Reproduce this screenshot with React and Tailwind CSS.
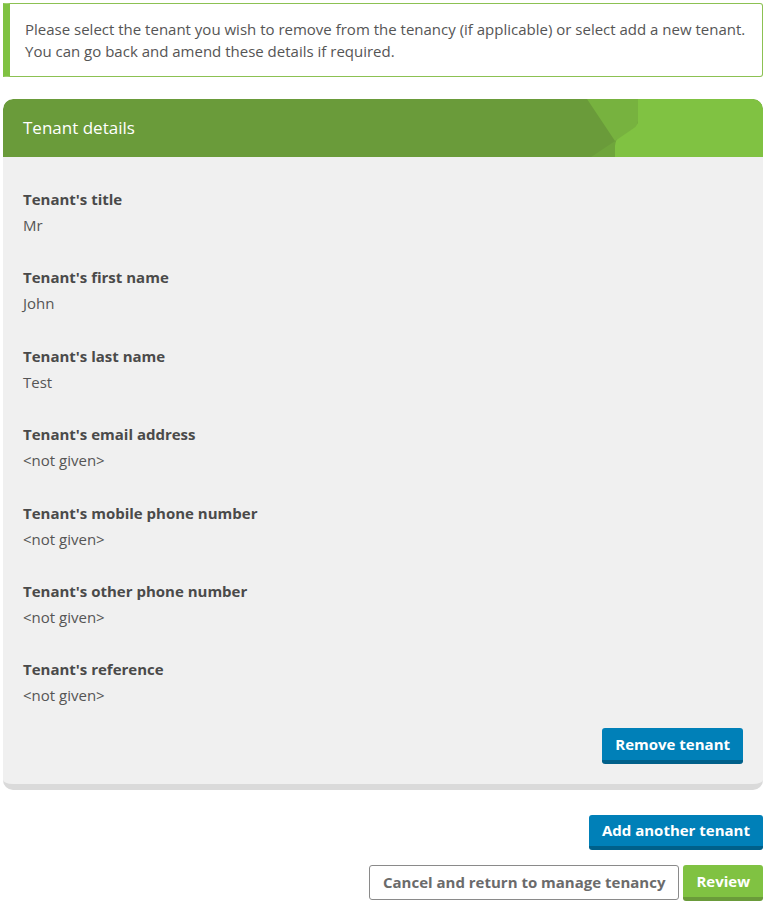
import React from 'react';

const fields = [
  { label: "Tenant's title", value: 'Mr' },
  { label: "Tenant's first name", value: 'John' },
  { label: "Tenant's last name", value: 'Test' },
  { label: "Tenant's email address", value: '<not given>' },
  { label: "Tenant's mobile phone number", value: '<not given>' },
  { label: "Tenant's other phone number", value: '<not given>' },
  { label: "Tenant's reference", value: '<not given>' },
];

const HeaderShapes = () => (
  <svg className="absolute inset-0 w-full h-full" viewBox="0 0 760 58" preserveAspectRatio="none">
    <path d="M635,0 H760 V58 H612 V47 Q612,41 617,37 L635,24 Z" fill="#80c242" />
    <path d="M584,0 H635 V22 Q635,26 631,29 L612,42 Z" fill="#77b23f" />
    <path d="M612,42 L588,58 H612 Z" fill="#6fa53c" />
  </svg>
);

export default function App() {
  return (
    <div className="bg-white min-h-screen pl-[3px] pr-[5px] pt-[3px] text-[15px] leading-[22px] text-[#555]" style={{ fontFamily: '"Open Sans", sans-serif' }}>
      {/* Info message */}
      <div className="border border-[#8cc152] border-l-[7px] border-l-[#80c242] rounded-r-[3px] pl-[15px] pr-4 py-[14px]">
        <p>Please select the tenant you wish to remove from the tenancy (if applicable) or select add a new tenant.</p>
        <p>You can go back and amend these details if required.</p>
      </div>

      {/* Tenant details card */}
      <div className="mt-[22px] rounded-[10px] bg-[#f0f0f0] border-b-[6px] border-[#dadada] overflow-hidden">
        <div className="relative h-[58px] bg-[#6a9b3a] rounded-t-[10px] overflow-hidden">
          <HeaderShapes />
          <h2 className="relative px-5 leading-[58px] text-[17px] text-white">Tenant details</h2>
        </div>
        <div className="px-5 pt-[31px] pb-5">
          {fields.map((f) => (
            <div key={f.label} className="mb-[30.4px]">
              <div className="font-bold text-[#4a4a4a]">{f.label}</div>
              <div className="mt-1">{f.value}</div>
            </div>
          ))}
          <div className="flex justify-end -mt-[9px]">
            <button className="bg-[#0080b8] border-b-4 border-[#00608a] rounded-[3px] px-[13px] h-9 text-white font-bold">
              Remove tenant
            </button>
          </div>
        </div>
      </div>

      {/* Actions */}
      <div className="flex justify-end mt-[25px]">
        <button className="bg-[#0080b8] border-b-4 border-[#00608a] rounded-[3px] px-[13px] h-[35px] text-white font-bold">
          Add another tenant
        </button>
      </div>
      <div className="flex justify-end gap-1 mt-[15px]">
        <button className="bg-white border border-[#8a8a8a] rounded-[3px] px-[13px] h-[35px] text-[#6b6b6b] font-bold">
          Cancel and return to manage tenancy
        </button>
        <button className="bg-[#80c242] border-b-4 border-[#6a9b3a] rounded-[3px] px-[13px] h-9 text-white font-bold">
          Review
        </button>
      </div>
    </div>
  );
}
